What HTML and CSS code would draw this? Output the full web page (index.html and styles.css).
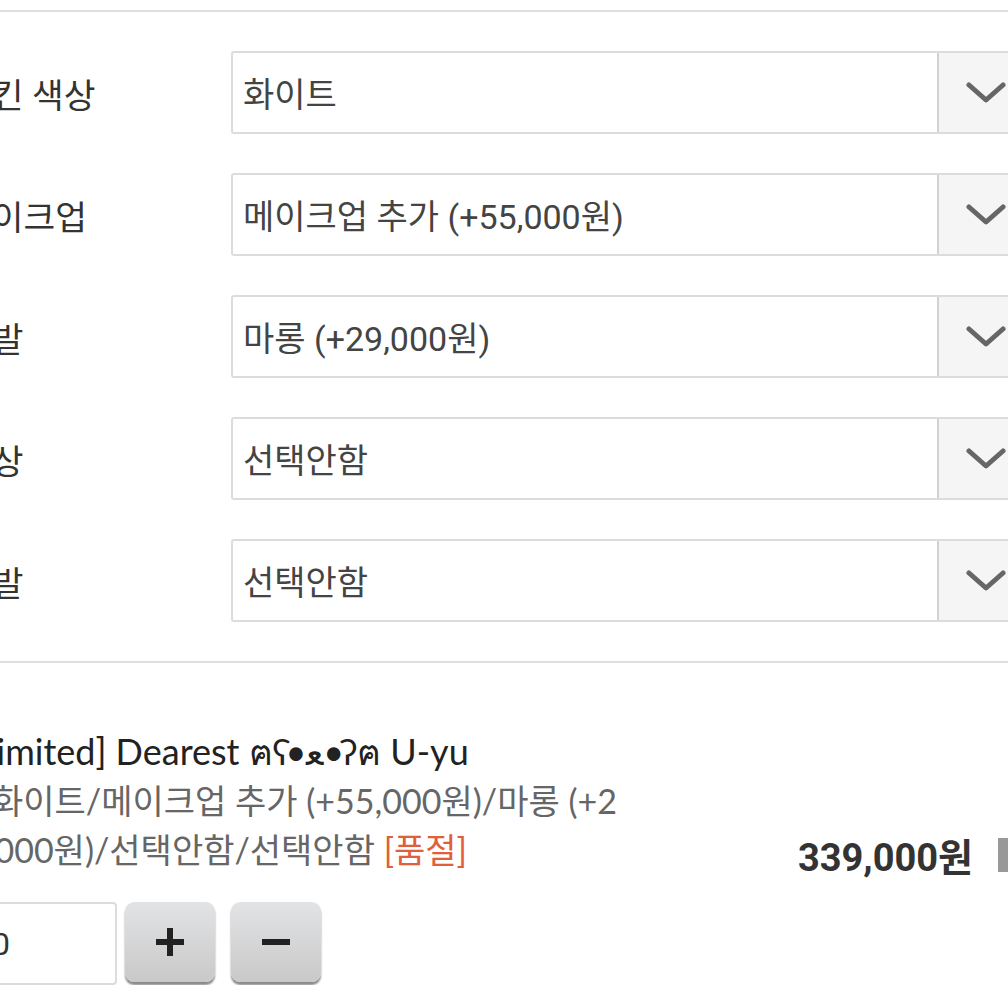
FILE: index.html
```html
<!DOCTYPE html>
<html lang="ko">
<head>
<meta charset="UTF-8" />
<meta name="viewport" content="width=device-width, initial-scale=1" />
<title>옵션 선택</title>
<link rel="stylesheet" href="styles.css">
</head>
<body>
<div class="page">
  <div class="top-rule"></div>

  <div class="options">
    <div class="opt-row">
      <span class="opt-label">스킨 색상</span>
      <div class="select">
        <span class="select-value">화이트</span>
        <span class="select-arrow"><svg width="40" height="24" viewBox="0 0 40 24"><polyline points="3,4 20,19 37,4" fill="none" stroke="#666" stroke-width="5" stroke-linecap="round" stroke-linejoin="round"/></svg></span>
      </div>
    </div>
    <div class="opt-row">
      <span class="opt-label">메이크업</span>
      <div class="select">
        <span class="select-value">메이크업 추가 (+55,000원)</span>
        <span class="select-arrow"><svg width="40" height="24" viewBox="0 0 40 24"><polyline points="3,4 20,19 37,4" fill="none" stroke="#666" stroke-width="5" stroke-linecap="round" stroke-linejoin="round"/></svg></span>
      </div>
    </div>
    <div class="opt-row">
      <span class="opt-label">가발</span>
      <div class="select">
        <span class="select-value">마롱 (+29,000원)</span>
        <span class="select-arrow"><svg width="40" height="24" viewBox="0 0 40 24"><polyline points="3,4 20,19 37,4" fill="none" stroke="#666" stroke-width="5" stroke-linecap="round" stroke-linejoin="round"/></svg></span>
      </div>
    </div>
    <div class="opt-row">
      <span class="opt-label">의상</span>
      <div class="select">
        <span class="select-value">선택안함</span>
        <span class="select-arrow"><svg width="40" height="24" viewBox="0 0 40 24"><polyline points="3,4 20,19 37,4" fill="none" stroke="#666" stroke-width="5" stroke-linecap="round" stroke-linejoin="round"/></svg></span>
      </div>
    </div>
    <div class="opt-row">
      <span class="opt-label">신발</span>
      <div class="select">
        <span class="select-value">선택안함</span>
        <span class="select-arrow"><svg width="40" height="24" viewBox="0 0 40 24"><polyline points="3,4 20,19 37,4" fill="none" stroke="#666" stroke-width="5" stroke-linecap="round" stroke-linejoin="round"/></svg></span>
      </div>
    </div>
  </div>

  <div class="item">
    <div class="item-main">
      <div class="item-info">
        <p class="item-name">[Limited] Dearest ฅʕ•ﻌ•ʔฅ U-yu</p>
        <p class="item-opts">화이트/메이크업 추가 (+55,000원)/마롱 (+29,000원)/선택안함/선택안함 <span class="soldout">[품절]</span></p>
      </div>
      <div class="item-price">
        <span class="price">339,000원</span>
        <span class="item-del"></span>
      </div>
    </div>
    <div class="qty">
      <input class="qty-input" type="text" value="0">
      <button class="qty-btn" type="button" aria-label="plus"><svg width="32" height="32" viewBox="0 0 32 32"><path d="M16 2v28M2 16h28" stroke="#222" stroke-width="6"/></svg></button>
      <button class="qty-btn minus" type="button" aria-label="minus"><svg width="32" height="32" viewBox="0 0 32 32"><path d="M2 16h28" stroke="#222" stroke-width="6"/></svg></button>
    </div>
  </div>
</div>
</body>
</html>
```

FILE: styles.css
```css
* {
  box-sizing: border-box;
}
body {
  margin: 0;
  background: #fff;
  overflow: hidden;
  font-family: Roboto, "Noto Sans CJK KR", sans-serif;
  color: #333;
}
.page {
  width: 1092px;
  margin-left: -40px;
}
.top-rule {
  height: 12px;
  border-bottom: 2px solid #dedede;
}

/* option selects */
.options {
  padding: 39px 0;
}
.opt-row {
  display: flex;
  align-items: center;
  margin-bottom: 39px;
}
.opt-row:last-child {
  margin-bottom: 0;
}
.opt-label {
  width: 271px;
  flex: none;
  font-size: 34.5px;
  color: #333;
}
.select {
  width: 804px;
  height: 83px;
  flex: none;
  display: flex;
  border: 2px solid #dcdcdc;
  border-radius: 3px;
  background: #fff;
}
.select-value {
  flex: 1;
  display: flex;
  align-items: center;
  padding-left: 10px;
  font-size: 34px;
  color: #444;
}
.select-arrow {
  width: 96px;
  flex: none;
  display: flex;
  align-items: center;
  justify-content: center;
  border-left: 2px solid #d2d2d2;
  background: #f5f5f5;
}

/* cart item */
.item {
  border-top: 2px solid #dedede;
  padding-top: 64px;
}
.item-main {
  display: flex;
  align-items: flex-end;
}
.item-info {
  width: 672px;
  flex: none;
  padding-left: 7px;
  font-family: Lato, "Noto Sans CJK KR", sans-serif;
}
.item-name {
  margin: 0;
  font-size: 36px;
  line-height: 49px;
  color: #222;
}
.item-opts {
  margin: 0;
  font-size: 34px;
  line-height: 49px;
  color: #666;
  text-indent: 25px;
  word-break: break-all;
}
.soldout {
  color: #e0603c;
}
.item-price {
  margin-left: auto;
  margin-bottom: -8px;
  display: flex;
  align-items: center;
  gap: 25px;
}
.price {
  font-family: Roboto, "Noto Sans CJK KR", sans-serif;
  font-weight: 700;
  font-size: 38px;
  color: #333;
}
.item-del {
  width: 54px;
  height: 34px;
  background: #999;
}

/* quantity */
.qty {
  display: flex;
  align-items: flex-start;
  margin-top: 28px;
  padding-left: 20px;
}
.qty-input {
  width: 137px;
  height: 83px;
  border: 2px solid #dcdcdc;
  border-radius: 4px;
  padding: 0 0 0 10px;
  font-family: Roboto, sans-serif;
  font-size: 32px;
  color: #333;
}
.qty-btn {
  width: 90px;
  height: 80px;
  margin-left: 8px;
  border: none;
  border-radius: 9px;
  background: linear-gradient(#e2e3e5, #c9c9c9);
  box-shadow: 0 3px 2px #8a8a8a;
  display: flex;
  align-items: center;
  justify-content: center;
  padding: 0;
}
.qty-btn.minus {
  margin-left: 16px;
}
```
